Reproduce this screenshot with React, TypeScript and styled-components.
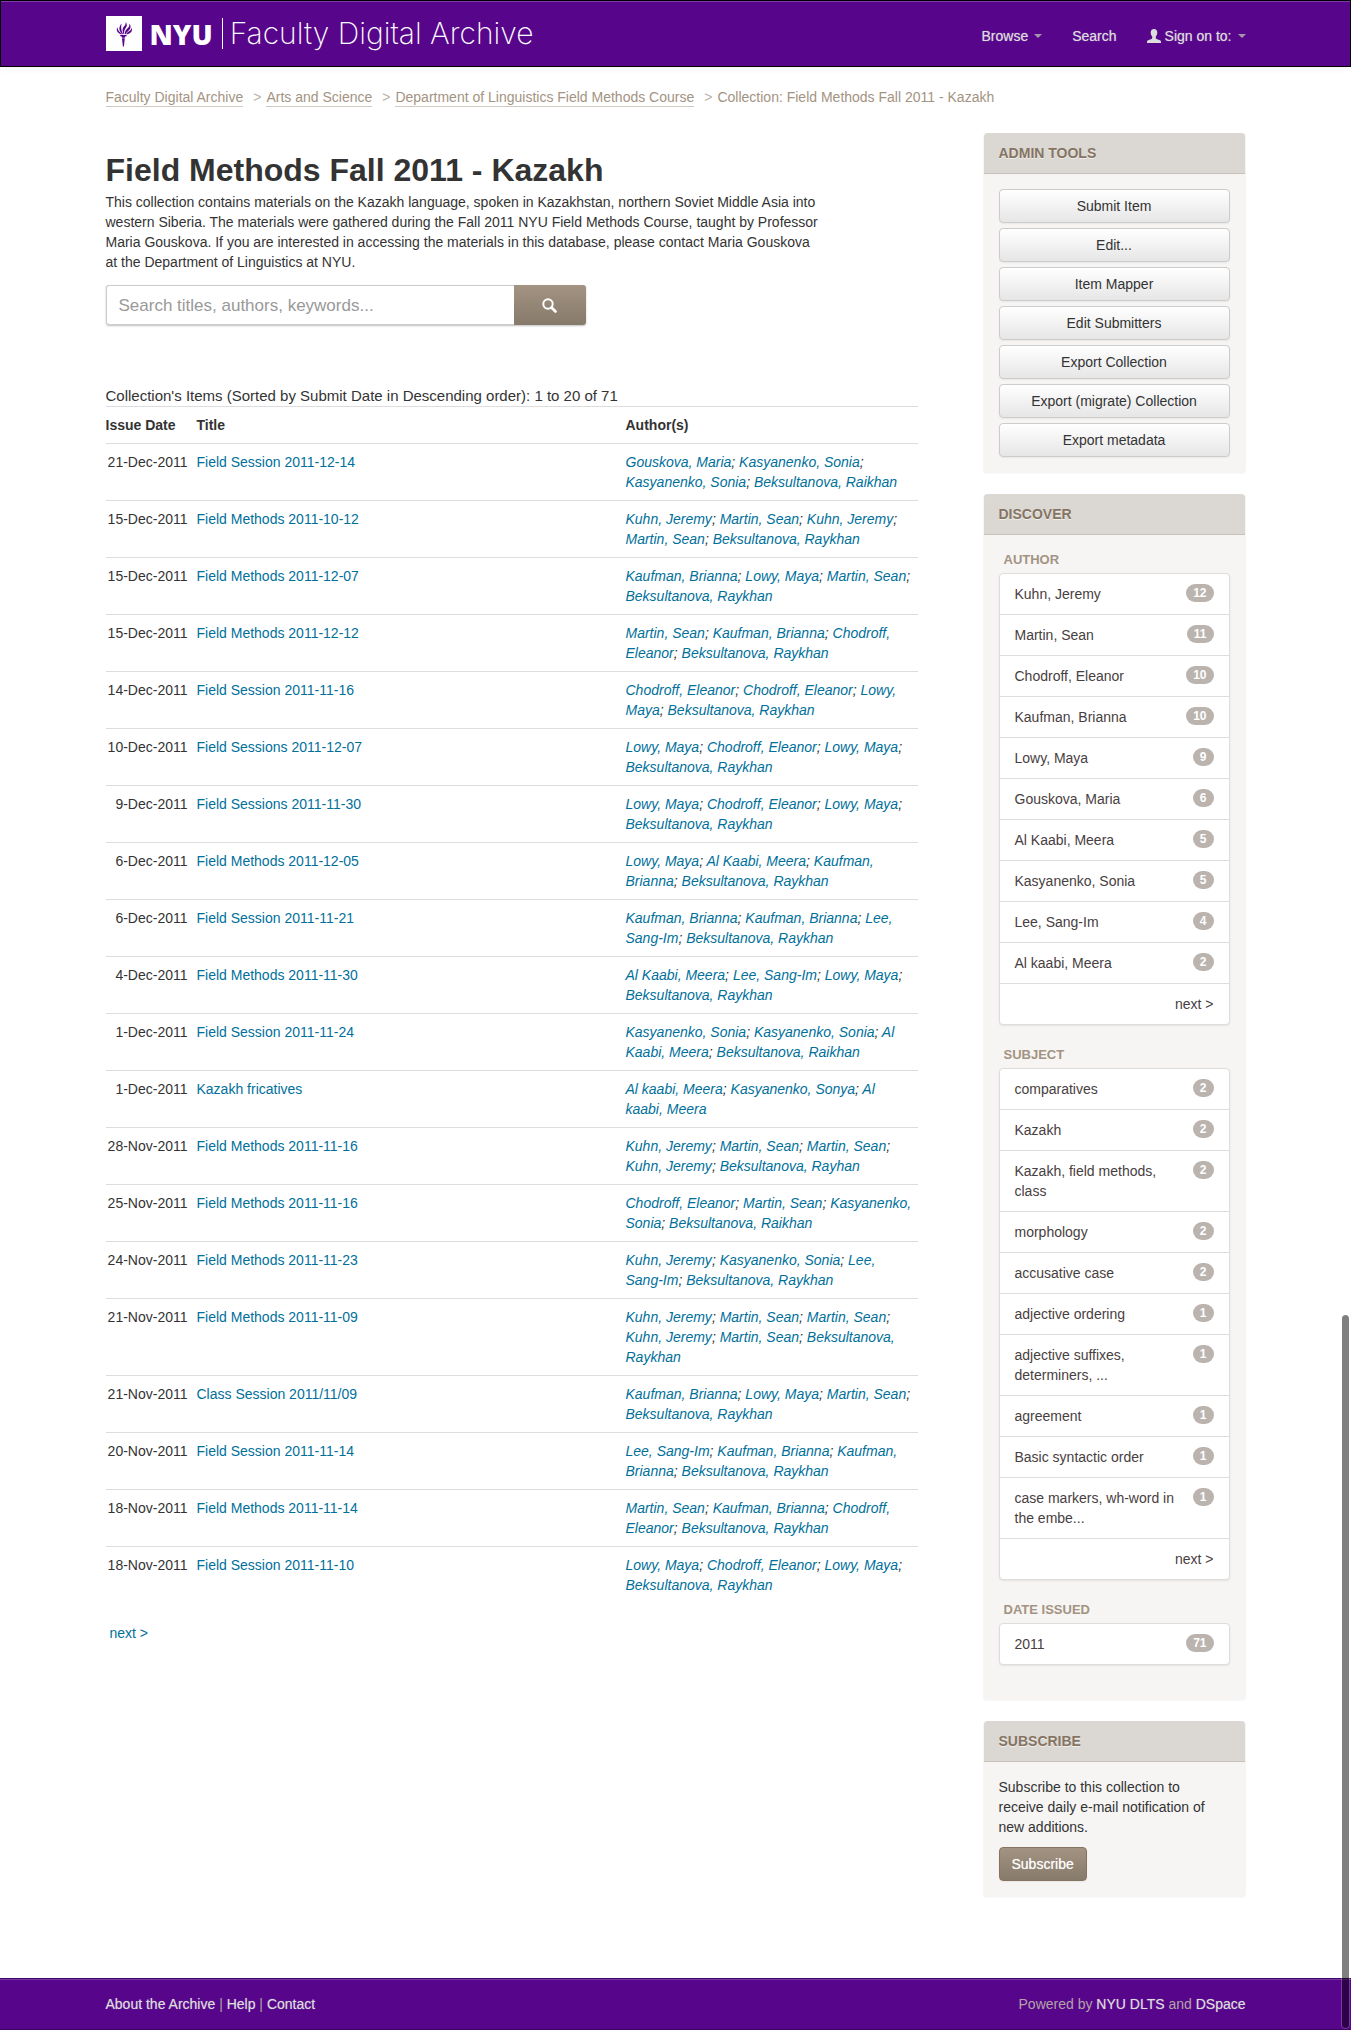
import React, { Fragment } from "react";
import styled, { createGlobalStyle } from "styled-components";

const GlobalStyle = createGlobalStyle`
  *, *::before, *::after { box-sizing: border-box; }
  body {
    margin: 0;
    background: #fff;
    color: #333;
    font-family: "Helvetica Neue", "Liberation Sans", Arial, sans-serif;
    font-size: 14px;
    line-height: 20px;
  }
  a { color: #00709b; text-decoration: none; }
  a:hover { text-decoration: underline; }
  button, input { font-family: inherit; }
`;

const Page = styled.div`
  display: flex;
  flex-direction: column;
  min-height: 100vh;
`;

const Container = styled.div`
  width: 100%;
  max-width: 1170px;
  margin: 0 auto;
  padding: 0 15px;
`;

/* Header */

const Header = styled.header`
  border: 1px solid #000;
  background: #57068c;
  box-shadow: inset 0 1px 0 #7a3ba6, 0 1px 8px rgba(0, 0, 0, 0.06);
`;

const HeaderRow = styled(Container)`
  display: flex;
  flex-wrap: wrap;
  align-items: center;
  justify-content: space-between;
  min-height: 65px;
`;

const Brand = styled.a`
  display: flex;
  align-items: center;
  color: #fff;
  font-family: Inter, "Open Sans", sans-serif;
  font-size: 28px;
  line-height: 36px;
  &:hover { text-decoration: none; }
`;

const BrandMark = styled.svg`
  display: block;
  width: 36px;
  height: 35px;
`;

const BrandShort = styled.span`
  margin-left: 8px;
  font-family: "Open Sans", sans-serif;
  font-weight: 800;
`;

const BrandName = styled.span`
  margin-left: 9px;
  padding-left: 7px;
  border-left: 1px solid #fff;
  font-size: 30px;
  line-height: 31px;
  font-weight: 200;
`;

const Nav = styled.nav`
  display: flex;
  gap: 30px;
  margin-top: 5px;
`;

const NavLink = styled.a`
  display: flex;
  align-items: center;
  gap: 4px;
  color: #ddd;
  text-shadow: 0 0 1px rgba(221, 221, 221, 0.6);
`;

const Caret = styled.span`
  margin-left: 2px;
  border: 4px solid transparent;
  border-top-color: #a497ab;
  border-bottom: 0;
`;

/* Breadcrumbs */

const Crumbs = styled.ol`
  display: flex;
  flex-wrap: wrap;
  gap: 8px;
  margin: 20px 0 26px;
  padding: 0;
  list-style: none;
  color: #a39382;
`;

const Crumb = styled.li`
  line-height: 20px;
  & + &::before {
    content: ">";
    padding: 0 5px 0 2px;
    color: #bbb3aa;
  }
  a {
    display: inline-block;
    line-height: 17px;
    color: #a39382;
    border-bottom: 1px solid #d1cac3;
  }
`;

/* Columns */

const Columns = styled.div`
  display: grid;
  grid-template-columns: minmax(0, 1fr) 263px;
  gap: 65px;
  align-items: start;
  @media (max-width: 900px) { grid-template-columns: minmax(0, 1fr); }
`;

const Title = styled.h1`
  margin: 18px 0 3px;
  font-size: 32px;
  line-height: 38px;
  font-weight: 700;
`;

const Intro = styled.p`
  max-width: 718px;
  margin: 0 0 13px;
`;

const SearchForm = styled.form`
  display: flex;
  max-width: 480px;
  height: 40px;
  border-radius: 3px;
  box-shadow: 0 1px 2px rgba(0, 0, 0, 0.25);
`;

const SearchInput = styled.input`
  flex: 1;
  min-width: 0;
  padding: 2px 12px 0;
  border: 1px solid #ccc;
  border-right: 0;
  border-radius: 3px 0 0 3px;
  background: #fff;
  font-size: 17px;
  &::placeholder { color: #999; opacity: 1; }
`;

const SearchButton = styled.button`
  display: flex;
  align-items: center;
  justify-content: center;
  width: 72px;
  padding: 0;
  border: 0;
  border-radius: 0 3px 3px 0;
  background: linear-gradient(#a39382, #867a6a);
  color: #fff;
`;

const Caption = styled.h2`
  margin: 60px 0 0;
  font-size: 15px;
  line-height: 21px;
  font-weight: 400;
`;

const Table = styled.table`
  width: 100%;
  border-collapse: collapse;
  table-layout: fixed;
  th, td {
    padding: 8px 0;
    border-top: 1px solid #ddd;
    text-align: left;
    vertical-align: top;
  }
`;

const DateCol = styled.col`width: 82px;`;
const TitleCol = styled.col`width: 438px;`;

const HeadCell = styled.th<{ $indent?: boolean }>`
  && { padding-left: ${(p) => (p.$indent ? 9 : 0)}px; }
  white-space: nowrap;
`;

const DateCell = styled.td`
  && { text-align: right; }
  white-space: nowrap;
`;

const TitleCell = styled.td`
  && { padding-left: 9px; }
`;

const AuthorCell = styled.td`
  && { padding-right: 5px; }
  font-style: italic;
`;

const Pager = styled.nav`
  margin-top: 20px;
  padding: 0 4px;
`;

/* Sidebar */

const Sidebar = styled.aside`
  display: grid;
  gap: 21px;
`;

const Panel = styled.section`
  border-radius: 4px;
  background: #f6f5f4;
  box-shadow: 0 1px 1px rgba(0, 0, 0, 0.03);
`;

const PanelHead = styled.h2`
  margin: 0 1px;
  padding: 10px 15px;
  border-bottom: 1px solid #c8c1ba;
  border-radius: 4px 4px 0 0;
  background: #dbd8d3;
  color: #857463;
  font-size: 14px;
  line-height: 20px;
  font-weight: 700;
  text-transform: uppercase;
  text-shadow: 0 1px 0 rgba(255, 255, 255, 0.6);
`;

const PanelBody = styled.div`
  padding: 15px 16px 16px;
`;

const Tools = styled.div`
  display: grid;
  gap: 5px;
`;

const Button = styled.button<{ $primary?: boolean }>`
  height: 34px;
  padding: 0 12px;
  border: 1px solid ${(p) => (p.$primary ? "#867463" : "#ccc")};
  border-radius: 4px;
  background: ${(p) => (p.$primary ? "linear-gradient(#a39382, #867a6a)" : "linear-gradient(#fff, #e6e6e6)")};
  box-shadow: 0 1px 2px rgba(0, 0, 0, 0.06);
  color: ${(p) => (p.$primary ? "#fff" : "#333")};
  text-shadow: ${(p) => (p.$primary ? "0 0 1px rgba(255, 255, 255, 0.6)" : "none")};
  font-size: 14px;
  line-height: 20px;
`;

const FacetBody = styled.div`
  padding: 15px 16px;
`;

const Facet = styled.section`
  margin-bottom: 20px;
`;

const FacetTitle = styled.h3`
  margin: 0 5px 3px;
  color: #a39382;
  font-size: 13px;
  line-height: 20px;
  font-weight: 700;
  text-transform: uppercase;
`;

const FacetList = styled.ul`
  margin: 0;
  padding: 0;
  border: 1px solid #ddd;
  border-radius: 4px;
  background: #fff;
  box-shadow: 0 1px 2px rgba(0, 0, 0, 0.08);
  list-style: none;
  li + li { border-top: 1px solid #ddd; }
`;

const FacetLink = styled.a<{ $end?: boolean }>`
  display: flex;
  align-items: flex-start;
  justify-content: ${(p) => (p.$end ? "flex-end" : "space-between")};
  gap: 5px;
  padding: 10px 15px;
  color: #484040;
`;

const Badge = styled.span`
  flex: none;
  padding: 3px 7px;
  border-radius: 10px;
  background: #bbb3ae;
  color: #fff;
  font-size: 12px;
  line-height: 12px;
  font-weight: 700;
`;

const SubscribeText = styled.p`
  margin: 0 0 10px;
  padding-right: 12px;
`;

/* Footer */

const Footer = styled.footer`
  margin-top: auto;
  border: solid #3d0462;
  border-width: 1px 0;
  background: #57068c;
  box-shadow: inset 0 1px 0 #7a3ba6;
  color: #b3a3a6;
  a { color: #ddd; text-shadow: 0 0 1px rgba(221, 221, 221, 0.5); }
`;

const FooterRow = styled(Container)`
  display: flex;
  flex-wrap: wrap;
  justify-content: space-between;
  padding-top: 15px;
  padding-bottom: 15px;
`;

const ScrollThumb = styled.div`
  position: fixed;
  right: 1px;
  bottom: 1px;
  width: 9px;
  height: 35.2vh;
  border: 1px solid rgba(255, 255, 255, 0.2);
  border-radius: 5px;
  background: rgba(0, 0, 0, 0.5);
  background-clip: padding-box;
  pointer-events: none;
`;

const items: [string, string, string][] = [
  ["21-Dec-2011", "Field Session 2011-12-14", "Gouskova, Maria; Kasyanenko, Sonia; Kasyanenko, Sonia; Beksultanova, Raikhan"],
  ["15-Dec-2011", "Field Methods 2011-10-12", "Kuhn, Jeremy; Martin, Sean; Kuhn, Jeremy; Martin, Sean; Beksultanova, Raykhan"],
  ["15-Dec-2011", "Field Methods 2011-12-07", "Kaufman, Brianna; Lowy, Maya; Martin, Sean; Beksultanova, Raykhan"],
  ["15-Dec-2011", "Field Methods 2011-12-12", "Martin, Sean; Kaufman, Brianna; Chodroff, Eleanor; Beksultanova, Raykhan"],
  ["14-Dec-2011", "Field Session 2011-11-16", "Chodroff, Eleanor; Chodroff, Eleanor; Lowy, Maya; Beksultanova, Raykhan"],
  ["10-Dec-2011", "Field Sessions 2011-12-07", "Lowy, Maya; Chodroff, Eleanor; Lowy, Maya; Beksultanova, Raykhan"],
  ["9-Dec-2011", "Field Sessions 2011-11-30", "Lowy, Maya; Chodroff, Eleanor; Lowy, Maya; Beksultanova, Raykhan"],
  ["6-Dec-2011", "Field Methods 2011-12-05", "Lowy, Maya; Al Kaabi, Meera; Kaufman, Brianna; Beksultanova, Raykhan"],
  ["6-Dec-2011", "Field Session 2011-11-21", "Kaufman, Brianna; Kaufman, Brianna; Lee, Sang-Im; Beksultanova, Raykhan"],
  ["4-Dec-2011", "Field Methods 2011-11-30", "Al Kaabi, Meera; Lee, Sang-Im; Lowy, Maya; Beksultanova, Raykhan"],
  ["1-Dec-2011", "Field Session 2011-11-24", "Kasyanenko, Sonia; Kasyanenko, Sonia; Al Kaabi, Meera; Beksultanova, Raikhan"],
  ["1-Dec-2011", "Kazakh fricatives", "Al kaabi, Meera; Kasyanenko, Sonya; Al kaabi, Meera"],
  ["28-Nov-2011", "Field Methods 2011-11-16", "Kuhn, Jeremy; Martin, Sean; Martin, Sean; Kuhn, Jeremy; Beksultanova, Rayhan"],
  ["25-Nov-2011", "Field Methods 2011-11-16", "Chodroff, Eleanor; Martin, Sean; Kasyanenko, Sonia; Beksultanova, Raikhan"],
  ["24-Nov-2011", "Field Methods 2011-11-23", "Kuhn, Jeremy; Kasyanenko, Sonia; Lee, Sang-Im; Beksultanova, Raykhan"],
  ["21-Nov-2011", "Field Methods 2011-11-09", "Kuhn, Jeremy; Martin, Sean; Martin, Sean; Kuhn, Jeremy; Martin, Sean; Beksultanova, Raykhan"],
  ["21-Nov-2011", "Class Session 2011/11/09", "Kaufman, Brianna; Lowy, Maya; Martin, Sean; Beksultanova, Raykhan"],
  ["20-Nov-2011", "Field Session 2011-11-14", "Lee, Sang-Im; Kaufman, Brianna; Kaufman, Brianna; Beksultanova, Raykhan"],
  ["18-Nov-2011", "Field Methods 2011-11-14", "Martin, Sean; Kaufman, Brianna; Chodroff, Eleanor; Beksultanova, Raykhan"],
  ["18-Nov-2011", "Field Session 2011-11-10", "Lowy, Maya; Chodroff, Eleanor; Lowy, Maya; Beksultanova, Raykhan"],
];

const tools = [
  "Submit Item",
  "Edit...",
  "Item Mapper",
  "Edit Submitters",
  "Export Collection",
  "Export (migrate) Collection",
  "Export metadata",
];

const facets: { title: string; more: boolean; entries: [string, number][] }[] = [
  {
    title: "Author",
    more: true,
    entries: [
      ["Kuhn, Jeremy", 12],
      ["Martin, Sean", 11],
      ["Chodroff, Eleanor", 10],
      ["Kaufman, Brianna", 10],
      ["Lowy, Maya", 9],
      ["Gouskova, Maria", 6],
      ["Al Kaabi, Meera", 5],
      ["Kasyanenko, Sonia", 5],
      ["Lee, Sang-Im", 4],
      ["Al kaabi, Meera", 2],
    ],
  },
  {
    title: "Subject",
    more: true,
    entries: [
      ["comparatives", 2],
      ["Kazakh", 2],
      ["Kazakh, field methods, class", 2],
      ["morphology", 2],
      ["accusative case", 2],
      ["adjective ordering", 1],
      ["adjective suffixes, determiners, ...", 1],
      ["agreement", 1],
      ["Basic syntactic order", 1],
      ["case markers, wh-word in the embe...", 1],
    ],
  },
  { title: "Date issued", more: false, entries: [["2011", 71]] },
];

function Torch() {
  return (
    <BrandMark viewBox="0 0 36 35" aria-hidden="true">
      <rect width="36" height="35" fill="#fff" />
      <g fill="#57068c">
        <path d="M14.2 19h6.4v1.2h-1.2l-.5 1.5h-3l-.5-1.5h-1.2z" />
        <path d="M16 22.2h2.8L17.9 30.500h-1z" />
        <path d="M14.600 18.300C11 16.500 10 14 11.400 11.300c.2 2.800 2 4.600 4.600 7z" />
        <path d="M16.300 18.300C12.700 14.500 12.400 11 15.700 7.500c-1 3.500-.8 6.500 1.400 10.800z" />
        <path d="M17.600 18.300c-1.800-4.600-1-6.500 1-8.600.9-1 1.300-2 1-3.700 1.800 2.300 1.500 4 .2 5.800-1.400 2-1.900 3.500-1.600 6.500z" />
        <path d="M18.800 18.300c0-3 1-4.500 2.800-6 1.600-1.300 2-2.600 1.600-4.800 2 2.300 1.700 4.600.2 6.200-1.700 1.700-2.900 2.500-3.800 4.600z" />
        <path d="M20.200 18.300c.9-1.800 2-2.500 3.600-3.500 1.200-.8 1.700-1.800 1.700-3.200 1.200 2.700.2 4.600-1.800 5.600-1.400.7-2 .8-2.800 1.100z" />
      </g>
    </BrandMark>
  );
}

function UserIcon() {
  return (
    <svg width="14" height="14" viewBox="0 0 14 14" aria-hidden="true">
      <path
        fill="currentColor"
        d="M7 0c2.200 0 3.300 1.500 3.300 3.600 0 1.600-.6 3-1.500 4v1.300c0 .5.300.8.800 1l3.300 1.400c.8.400 1.100.9 1.100 1.700v1H0v-1c0-.8.300-1.300 1.100-1.700l3.300-1.400c.5-.2.800-.5.800-1V7.600c-.9-1-1.500-2.400-1.500-4C3.700 1.500 4.800 0 7 0z"
      />
    </svg>
  );
}

function SearchIcon() {
  return (
    <svg width="15" height="15" viewBox="0 0 15 15" fill="none" stroke="currentColor" aria-hidden="true">
      <circle cx="6" cy="6" r="4.700" strokeWidth="2" />
      <path d="M9.500 9.500l4 4" strokeWidth="2.600" strokeLinecap="round" />
    </svg>
  );
}

function Authors({ names }: { names: string }) {
  return (
    <>
      {names.split("; ").map((name, i) => (
        <Fragment key={i}>
          {i > 0 && "; "}
          <a href="#">{name}</a>
        </Fragment>
      ))}
    </>
  );
}

export default function App() {
  return (
    <Page>
      <GlobalStyle />
      <Header>
        <HeaderRow>
          <Brand href="#">
            <Torch />
            <BrandShort>NYU</BrandShort>
            <BrandName>Faculty Digital Archive</BrandName>
          </Brand>
          <Nav aria-label="Main">
            <NavLink href="#">Browse <Caret /></NavLink>
            <NavLink href="#">Search</NavLink>
            <NavLink href="#"><UserIcon />Sign on to: <Caret /></NavLink>
          </Nav>
        </HeaderRow>
      </Header>

      <Container as="main">
        <Crumbs>
          <Crumb><a href="#">Faculty Digital Archive</a></Crumb>
          <Crumb><a href="#">Arts and Science</a></Crumb>
          <Crumb><a href="#">Department of Linguistics Field Methods Course</a></Crumb>
          <Crumb>Collection: Field Methods Fall 2011 - Kazakh</Crumb>
        </Crumbs>

        <Columns>
          <div>
            <Title>Field Methods Fall 2011 - Kazakh</Title>
            <Intro>
              This collection contains materials on the Kazakh language, spoken in Kazakhstan, northern Soviet
              Middle Asia into western Siberia. The materials were gathered during the Fall 2011 NYU Field Methods
              Course, taught by Professor Maria Gouskova. If you are interested in accessing the materials in this
              database, please contact Maria Gouskova at the Department of Linguistics at NYU.
            </Intro>
            <SearchForm role="search" onSubmit={(e) => e.preventDefault()}>
              <SearchInput type="text" aria-label="Search this collection" placeholder="Search titles, authors, keywords..." />
              <SearchButton type="submit" aria-label="Search"><SearchIcon /></SearchButton>
            </SearchForm>

            <Caption id="items">Collection's Items (Sorted by Submit Date in Descending order): 1 to 20 of 71</Caption>
            <Table aria-labelledby="items">
              <colgroup>
                <DateCol />
                <TitleCol />
                <col />
              </colgroup>
              <thead>
                <tr>
                  <HeadCell>Issue Date</HeadCell>
                  <HeadCell $indent>Title</HeadCell>
                  <HeadCell>Author(s)</HeadCell>
                </tr>
              </thead>
              <tbody>
                {items.map(([date, title, authors], i) => (
                  <tr key={i}>
                    <DateCell>{date}</DateCell>
                    <TitleCell><a href="#">{title}</a></TitleCell>
                    <AuthorCell><Authors names={authors} /></AuthorCell>
                  </tr>
                ))}
              </tbody>
            </Table>
            <Pager aria-label="Pages"><a href="#">next &gt;</a></Pager>
          </div>

          <Sidebar>
            <Panel>
              <PanelHead>Admin Tools</PanelHead>
              <PanelBody>
                <Tools>
                  {tools.map((tool) => <Button key={tool} type="button">{tool}</Button>)}
                </Tools>
              </PanelBody>
            </Panel>
            <Panel>
              <PanelHead>Discover</PanelHead>
              <FacetBody>
                {facets.map((facet) => (
                  <Facet key={facet.title}>
                    <FacetTitle>{facet.title}</FacetTitle>
                    <FacetList>
                      {facet.entries.map(([name, count]) => (
                        <li key={name}>
                          <FacetLink href="#"><span>{name}</span><Badge>{count}</Badge></FacetLink>
                        </li>
                      ))}
                      {facet.more && <li><FacetLink href="#" $end>next &gt;</FacetLink></li>}
                    </FacetList>
                  </Facet>
                ))}
              </FacetBody>
            </Panel>
            <Panel>
              <PanelHead>Subscribe</PanelHead>
              <PanelBody>
                <SubscribeText>
                  Subscribe to this collection to receive daily e-mail notification of new additions.
                </SubscribeText>
                <Button type="button" $primary>Subscribe</Button>
              </PanelBody>
            </Panel>
          </Sidebar>
        </Columns>
      </Container>

      <Footer>
        <FooterRow>
          <div><a href="#">About the Archive</a> | <a href="#">Help</a> | <a href="#">Contact</a></div>
          <div>Powered by <a href="#">NYU DLTS</a> and <a href="#">DSpace</a></div>
        </FooterRow>
      </Footer>
      <ScrollThumb />
    </Page>
  );
}
